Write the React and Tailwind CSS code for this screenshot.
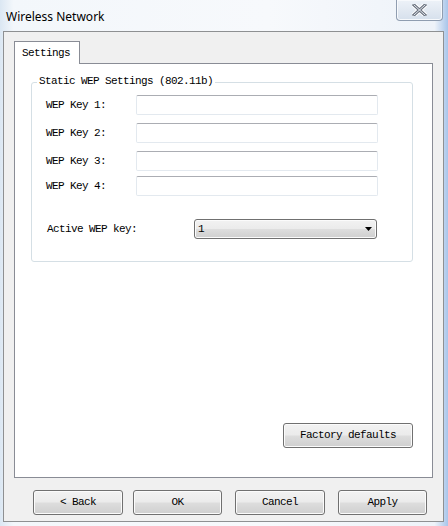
function WinButton({ children, className = '' }) {
  return (
    <button
      type="button"
      className={`h-[25px] rounded-[3px] border border-[#707070] bg-[linear-gradient(to_bottom,#f2f2f2_0%,#ebebeb_48%,#dddddd_52%,#cfcfcf_100%)] shadow-[inset_0_0_0_1px_#fbfbfb] text-[11px] tracking-[-0.6px] text-black font-['Liberation_Mono',monospace] leading-none ${className}`}
    >
      {children}
    </button>
  );
}

function KeyRow({ label, className = '' }) {
  return (
    <div className={`flex items-center ${className}`}>
      <span className="w-[104px] shrink-0 pl-[14px] text-[11px] tracking-[-0.6px]">{label}</span>
      <input
        className="h-[20px] w-[242px] rounded-[2px] border border-[#e3e9ef] border-t-[#abadb3] bg-white outline-none"
        defaultValue=""
      />
    </div>
  );
}

export default function App() {
  return (
    <div className="w-[448px] h-[526px] overflow-hidden bg-[linear-gradient(to_right,#dbe7f3_0%,#f3f7fb_3%,#f7f9fc_60%,#eef3f9_97%,#a8c5ea_100%)] font-['Liberation_Mono',monospace] text-black">
      {/* title bar */}
      <div className="flex h-[31px] items-start justify-between">
        <span className="pl-[6px] pt-[9px] text-[12px] leading-[16px] text-black font-['Noto_Sans','Liberation_Sans',sans-serif]">
          Wireless Network
        </span>
        <div className="mr-[5px] flex h-[21px] w-[47px] items-center justify-center rounded-b-[4px] border border-t-0 border-[#8f9db0] bg-[linear-gradient(to_bottom,#edf2f8_0%,#e2e9f2_50%,#d6e0ec_100%)] shadow-[inset_0_0_0_1px_#f7f9fc]">
          <svg width="15" height="12" viewBox="0 0 15 12">
            <path d="M2 1 L13 11 M13 1 L2 11" stroke="#ffffff" strokeWidth="5" strokeLinecap="square" />
            <path d="M2 1 L13 11 M13 1 L2 11" stroke="#6b7380" strokeWidth="3" strokeLinecap="square" />
            <path d="M2 1 L13 11 M13 1 L2 11" stroke="#e6e9ee" strokeWidth="1" strokeLinecap="square" />
          </svg>
        </div>
      </div>

      {/* client area */}
      <div className="ml-[3px] flex h-[491px] w-[441px] flex-col border border-[#8e9092] bg-[#f0f0f0] pl-[10px] pt-[9px]">
        <div className="relative z-10 -mb-px flex h-[23px] w-[66px] items-center border border-b-0 border-[#898c95] bg-white pl-[7px] text-[11px] tracking-[-0.6px]">
          Settings
        </div>
        <div className="flex h-[415px] w-[419px] flex-col border border-[#898c95] bg-white">
          <div className="relative ml-[16px] mt-[18px] h-[180px] w-[382px] rounded-[3px] border border-[#d5dfe5] shadow-[inset_-1px_-1px_0_#ffffff]">
            <span className="absolute left-[5px] -top-[9px] bg-white px-[2px] text-[11px] tracking-[-0.6px] leading-[14px]">
              Static WEP Settings (802.11b)
            </span>
            <KeyRow label="WEP Key 1:" className="mt-[12px]" />
            <KeyRow label="WEP Key 2:" className="mt-[8px]" />
            <KeyRow label="WEP Key 3:" className="mt-[8px]" />
            <KeyRow label="WEP Key 4:" className="mt-[5px]" />
            <div className="mt-[23px] flex items-center">
              <span className="w-[162px] shrink-0 pl-[15px] text-[11px] tracking-[-0.6px]">Active WEP key:</span>
              <div className="flex h-[20px] w-[183px] items-center justify-between rounded-[3px] border border-[#707070] bg-[linear-gradient(to_bottom,#f2f2f2_0%,#ebebeb_48%,#dddddd_52%,#cfcfcf_100%)] pl-[3px] pr-[4px] shadow-[inset_0_0_0_1px_#fbfbfb]">
                <span className="text-[11px] tracking-[-0.6px]">1</span>
                <svg width="7" height="4" viewBox="0 0 7 4">
                  <path d="M0 0 H7 L3.5 4 Z" fill="#000" />
                </svg>
              </div>
            </div>
          </div>
          <div className="mt-auto mb-[29px] mr-[19px] flex justify-end">
            <WinButton className="w-[130px]">Factory defaults</WinButton>
          </div>
        </div>

        <div className="mt-[12px] flex pl-[19px]">
          <WinButton className="w-[90px]">&lt; Back</WinButton>
          <WinButton className="ml-[10px] w-[89px]">OK</WinButton>
          <WinButton className="ml-[13px] w-[90px]">Cancel</WinButton>
          <WinButton className="ml-[13px] w-[89px]">Apply</WinButton>
        </div>
      </div>
    </div>
  );
}
